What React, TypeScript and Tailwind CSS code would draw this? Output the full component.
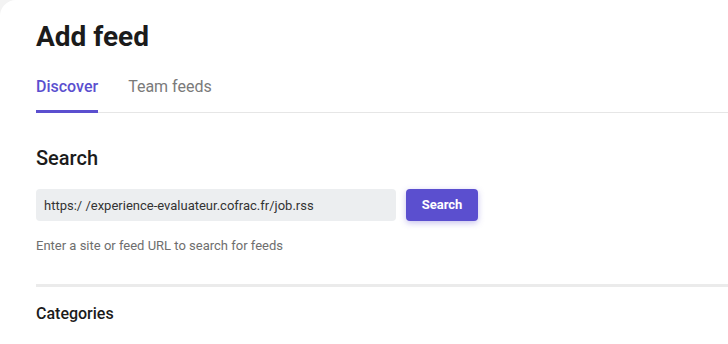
import React from "react";

const AddFeed = () => {
  const tabs = [
    { label: "Discover", active: true },
    { label: "Team feeds", active: false },
  ];

  return (
    <div className="w-[728px] h-[344px] overflow-hidden bg-[#f3f3f3]">
      <div
        className="h-full bg-white rounded-tl-2xl text-[#1b1b1b]"
        style={{ fontFamily: "Roboto, 'Noto Sans', sans-serif" }}
      >
        <div className="pl-9 pt-[19px]">
          <h1 className="text-[28px] leading-9 font-bold">Add feed</h1>

          {/* Tabs */}
          <div className="mt-5 flex gap-[30px] border-b border-[#e6e6e6]">
            {tabs.map((tab) => (
              <button
                key={tab.label}
                className={`-mb-px pb-[11px] text-base leading-6 border-b-[3px] ${
                  tab.active
                    ? "border-[#5b4fcf] text-[#5b4fcf] font-medium"
                    : "border-transparent text-[#7a7a7a]"
                }`}
              >
                {tab.label}
              </button>
            ))}
          </div>

          {/* Search */}
          <h2 className="mt-[31px] text-xl leading-7 font-medium">Search</h2>
          <div className="mt-[17px] flex gap-[10px]">
            <input
              className="w-[360px] h-8 px-2 rounded bg-[#eceef0] text-[13px] text-[#333] outline-none"
              defaultValue="https:/ /experience-evaluateur.cofrac.fr/job.rss"
            />
            <button className="w-[72px] h-8 rounded bg-[#5b4fcf] text-white text-[13px] font-bold shadow-[0_2px_6px_rgba(91,79,207,0.35)]">
              Search
            </button>
          </div>
          <p className="mt-[15px] text-[13px] leading-5 text-[#6e6e6e]">
            Enter a site or feed URL to search for feeds
          </p>

          <div className="mt-[28px] h-[3px] bg-[#ebebeb]" />

          <h3 className="mt-[15px] text-base leading-6 font-medium">
            Categories
          </h3>
        </div>
      </div>
    </div>
  );
};

export default function App() {
  return <AddFeed />;
}
